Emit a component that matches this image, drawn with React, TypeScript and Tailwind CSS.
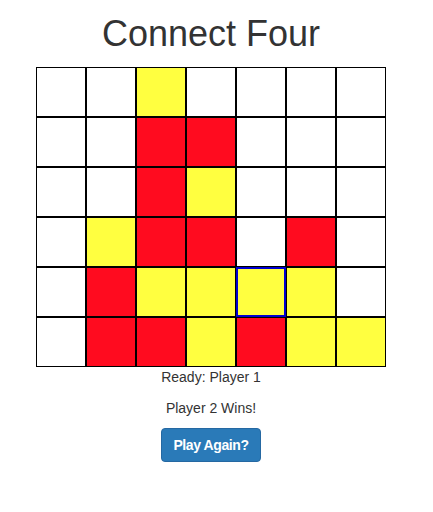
type Cell = 'W' | 'R' | 'Y';

const board: Cell[][] = [
  ['W', 'W', 'Y', 'W', 'W', 'W', 'W'],
  ['W', 'W', 'R', 'R', 'W', 'W', 'W'],
  ['W', 'W', 'R', 'Y', 'W', 'W', 'W'],
  ['W', 'Y', 'R', 'R', 'W', 'R', 'W'],
  ['W', 'R', 'Y', 'Y', 'Y', 'Y', 'W'],
  ['W', 'R', 'R', 'Y', 'R', 'Y', 'Y'],
];

// last move gets the blue outline
const last = { row: 4, col: 4 };

const fill: Record<Cell, string> = {
  W: 'bg-white',
  R: 'bg-[#ff0b1f]',
  Y: 'bg-[#ffff40]',
};

export default function App() {
  return (
    <div
      className="w-[422px] flex flex-col items-center text-[#333] bg-white"
      style={{ fontFamily: '"Liberation Sans", Arial, sans-serif' }}
    >
      <h1 className="mt-[14px] mb-[13px] text-[36px] leading-[40px]">Connect Four</h1>

      <div className="grid grid-cols-7 w-[350px]">
        {board.map((row, r) =>
          row.map((cell, c) => {
            const active = r === last.row && c === last.col;
            return (
              <div
                key={`${r}-${c}`}
                className={`h-[50px] w-[50px] box-border ${fill[cell]} ${
                  active ? 'border-2 border-[#0000d0]' : 'border border-black'
                }`}
              />
            );
          })
        )}
      </div>

      <p className="text-[14px] leading-5 mb-[11px]">Ready: Player 1</p>
      <p className="text-[14px] leading-5 mb-[10px]">Player 2 Wins!</p>

      <button className="w-[100px] h-[34px] rounded-[4px] border border-[#2568a2] bg-[#2a7ab8] text-white text-[14px] leading-5 font-bold tracking-[-0.4px]">
        Play Again?
      </button>
    </div>
  );
}
